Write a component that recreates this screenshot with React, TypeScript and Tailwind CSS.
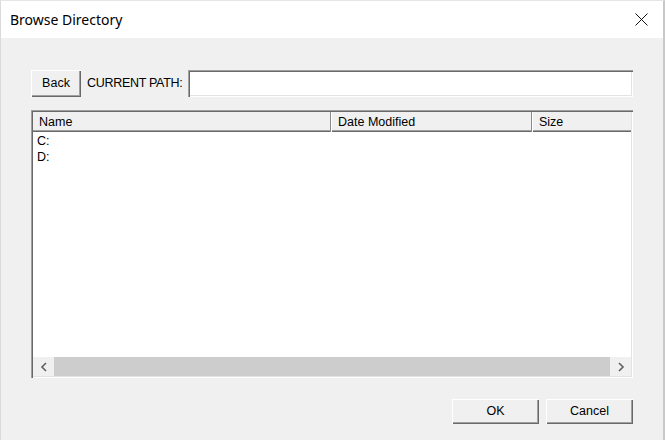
const raised =
  "shadow-[inset_1px_1px_#ffffff,inset_-1px_-1px_#696969,inset_-2px_-2px_#a0a0a0]";
const sunken =
  "shadow-[inset_1px_1px_#a0a0a0,inset_2px_2px_#696969,inset_-1px_-1px_#ffffff,inset_-2px_-2px_#e3e3e3]";

const columns = [
  { label: "Name", width: "w-[299px]" },
  { label: "Date Modified", width: "w-[201px]" },
  { label: "Size", width: "flex-1" },
];

const drives = ["C:", "D:"];

const Chevron = ({ dir }: { dir: "left" | "right" }) => (
  <svg width="8" height="10" viewBox="0 0 8 10">
    <polyline
      points={dir === "left" ? "6,1 2,5 6,9" : "2,1 6,5 2,9"}
      fill="none"
      stroke="#606060"
      strokeWidth="1.6"
    />
  </svg>
);

export default function App() {
  return (
    <div className="w-[665px] h-[440px] flex flex-col bg-[#f0f0f0] border-t border-l border-r-2 border-t-[#e6e6e6] border-l-[#dadada] border-r-[#c8c8c8] font-['Liberation_Sans',Arial,sans-serif] text-[12.5px] text-black">
      {/* Title bar */}
      <div className="h-[37px] bg-white flex items-center justify-between pl-[9px] pr-[15px]">
        <span className="font-['Noto_Sans',sans-serif] text-[14px] text-[#000]">Browse Directory</span>
        <svg width="13" height="13" viewBox="0 0 13 13">
          <line x1="0.5" y1="0.5" x2="12.5" y2="12.5" stroke="#111" strokeWidth="1" />
          <line x1="12.5" y1="0.5" x2="0.5" y2="12.5" stroke="#111" strokeWidth="1" />
        </svg>
      </div>

      {/* Body */}
      <div className="flex flex-col pl-[30px] pr-[30px] pt-[32px]">
        {/* Path row */}
        <div className="flex items-center h-[27px]">
          <button className={`w-[50px] h-[27px] bg-[#f0f0f0] ${raised} flex items-center justify-center`}>
            Back
          </button>
          <span className="ml-[6px] tracking-[-0.3px]">CURRENT PATH:</span>
          <div className={`ml-[6px] flex-1 h-[27px] bg-white ${sunken}`} />
        </div>

        {/* List view */}
        <div className={`mt-[13px] h-[268px] bg-white p-[2px] flex flex-col ${sunken}`}>
          <div className="flex h-[20px] bg-[#f0f0f0] shadow-[inset_0_-1px_#696969,inset_0_-2px_#a0a0a0] shrink-0">
            {columns.map((c, i) => (
              <div
                key={c.label}
                className={`${c.width} h-full flex items-center pl-[6px] pt-[1px] ${
                  i < columns.length - 1
                    ? "shadow-[inset_-1px_0_#ffffff,inset_-2px_0_#8a8a8a]"
                    : ""
                }`}
              >
                {c.label}
              </div>
            ))}
          </div>
          <div className="flex-1 flex flex-col pt-[1px] pl-[4px]">
            {drives.map((d) => (
              <div key={d} className="h-[16px] flex items-center">
                {d}
              </div>
            ))}
          </div>
          {/* Horizontal scrollbar */}
          <div className="h-[19px] flex shrink-0">
            <div className="w-[21px] bg-[#f0f0f0] flex items-center justify-center">
              <Chevron dir="left" />
            </div>
            <div className="flex-1 bg-[#cdcdcd]" />
            <div className="w-[21px] bg-[#f0f0f0] flex items-center justify-center">
              <Chevron dir="right" />
            </div>
          </div>
        </div>

        {/* Footer buttons */}
        <div className="mt-[21px] flex justify-end gap-[7px]">
          <button className={`w-[87px] h-[25px] bg-[#f0f0f0] ${raised} flex items-center justify-center`}>
            OK
          </button>
          <button className={`w-[87px] h-[25px] bg-[#f0f0f0] ${raised} flex items-center justify-center`}>
            Cancel
          </button>
        </div>
      </div>
    </div>
  );
}
